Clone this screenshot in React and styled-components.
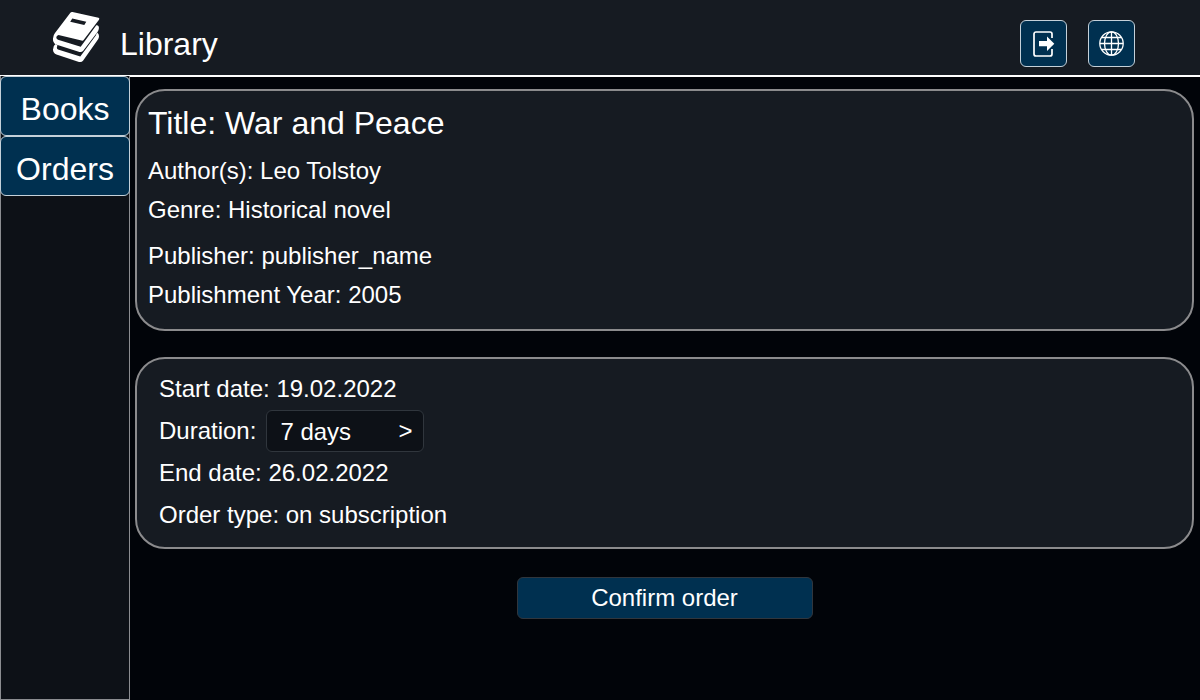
import React, { useState } from 'react';
import styled, { createGlobalStyle } from 'styled-components';

const GlobalStyle = createGlobalStyle`
  *, *::before, *::after { box-sizing: border-box; }
  body {
    margin: 0;
    background: #010409;
    color: #fff;
    font-family: "Liberation Sans", Arial, sans-serif;
    font-size: 24px;
  }
  button, select { font: inherit; color: inherit; }
`;

const Page = styled.div`
  display: flex;
  flex-direction: column;
  min-height: 100vh;
`;

const Header = styled.header`
  display: flex;
  align-items: center;
  justify-content: space-between;
  height: 77px;
  padding: 0 65px 0 52px;
  background: #161b22;
  border-bottom: 2px solid #fff;
`;

const Brand = styled.div`
  display: flex;
  align-items: flex-start;
  gap: 20px;
`;

const BrandName = styled.h1`
  margin: 0;
  padding-top: 15px;
  font-size: 32px;
  font-weight: 400;
  line-height: 36px;
`;

const HeaderActions = styled.div`
  display: flex;
  gap: 21px;
  padding-top: 12px;
`;

const IconButton = styled.button`
  display: flex;
  align-items: center;
  justify-content: center;
  width: 47px;
  height: 47px;
  padding: 0;
  background: #003050;
  border: 1px solid #c4d0d9;
  border-radius: 6px;
  cursor: pointer;
`;

const Body = styled.div`
  display: flex;
  flex: 1;
`;

const Sidebar = styled.nav`
  flex: 0 0 130px;
  margin-top: -1px;
  background: #0d1117;
  border: 1px solid #8b8d91;
  border-top: 0;
`;

const NavLink = styled.a`
  display: flex;
  align-items: center;
  justify-content: center;
  height: 60px;
  margin: 0 -1px;
  padding-top: 6px;
  background: #003050;
  border: 1px solid #c4d0d9;
  border-radius: 6px;
  color: #fff;
  font-size: 32px;
  line-height: 36px;
  text-decoration: none;
`;

const Main = styled.main`
  display: flex;
  flex: 1;
  flex-direction: column;
  padding: 12px 6px 24px 5px;
`;

const Card = styled.section`
  padding: ${(p) => (p.$form ? '9px 22px 11px' : '14px 11px 20px')};
  background: #161b22;
  border: 2px solid #8b8b8d;
  border-radius: 30px;
  & + & { margin-top: 26px; }
`;

const BookTitle = styled.h2`
  margin: 0 0 16px;
  font-size: 32px;
  font-weight: 400;
  line-height: 36px;
`;

const DetailGroup = styled.div`
  display: flex;
  flex-direction: column;
  gap: 11px;
  line-height: 28px;
  & + & { margin-top: 18px; }
`;

const FormRow = styled.div`
  display: flex;
  align-items: center;
  gap: 10px;
  line-height: 42px;
`;

const SelectBox = styled.div`
  position: relative;
  width: 158px;
  height: 42px;
`;

const Select = styled.select`
  appearance: none;
  width: 100%;
  height: 100%;
  padding: 0 36px 2px 13px;
  background: #0d1117;
  border: 1px solid #30363d;
  border-radius: 6px;
`;

const SelectArrow = styled.span`
  position: absolute;
  top: 0;
  right: 12px;
  pointer-events: none;
`;

const ConfirmButton = styled.button`
  align-self: center;
  width: 296px;
  height: 42px;
  margin-top: 28px;
  padding: 0;
  background: #003050;
  border: 1px solid #30363d;
  border-radius: 6px;
  cursor: pointer;
`;

function BooksIcon() {
  return (
    <svg width="48" height="54" viewBox="0 0 48 54" fill="#fff" aria-hidden="true">
      <path
        fillRule="evenodd"
        d="M20.500 1 L46.500 6.800 Q48 7.200 47 8.800 L31.800 28.800 Q31 30 29.500 29.600 L6.500 24 Q4.300 24.500 4.300 26.500 Q4.300 28.100 6 28.700 L28.700 35.800 L44.300 14.200 Q47.500 14 46.800 18 Q46.500 19.500 45.500 21 L31 40 Q29.500 41.500 27.500 40.900 L4 33.500 Q.600 31.500 1 27.500 Q1.200 24 3 22 L18 2.200 Q19 .700 20.500 1Z M20.300 7.500 L18.200 10.700 L32.300 14 L34.300 10.700Z"
      />
      <path d="M3.500 33 L5.500 34.500 Q4 37.500 6 38.400 L28.300 45.500 L43.800 24.500 L45 21.500 Q48.200 23.500 46.300 28 L31 49.700 Q29.500 51.600 27 50.900 L4.500 43.500 Q1 42 1 38.500 Q1.200 34.500 3.500 33Z" />
    </svg>
  );
}

function ExitIcon() {
  return (
    <svg width="22" height="26" viewBox="0 0 22 26" fill="none" aria-hidden="true">
      <path d="M19 7V3a2 2 0 0 0-2-2H3a2 2 0 0 0-2 2v20a2 2 0 0 0 2 2h14a2 2 0 0 0 2-2v-5" stroke="#fff" strokeWidth="1.700" />
      <path d="M6 10h8V5.500l7.300 7.200-7.300 7.200v-4.700H6z" fill="#fff" />
    </svg>
  );
}

function GlobeIcon() {
  return (
    <svg width="25" height="25" viewBox="0 0 25 25" fill="none" stroke="#fff" strokeWidth="1.300" aria-hidden="true">
      <circle cx="12.500" cy="12.500" r="11.700" />
      <ellipse cx="12.500" cy="12.500" rx="7" ry="11.700" />
      <path d="M12.500 1v23M1 12.500h23M3 6.500h19M3 18.500h19" />
    </svg>
  );
}

export default function App() {
  const [days, setDays] = useState('7');
  const end = { 7: '26.02.2022', 14: '05.03.2022' }[days];

  return (
    <>
      <GlobalStyle />
      <Page>
        <Header>
          <Brand>
            <BooksIcon />
            <BrandName>Library</BrandName>
          </Brand>
          <HeaderActions>
            <IconButton type="button" aria-label="Log out"><ExitIcon /></IconButton>
            <IconButton type="button" aria-label="Language"><GlobeIcon /></IconButton>
          </HeaderActions>
        </Header>
        <Body>
          <Sidebar>
            <NavLink href="#books">Books</NavLink>
            <NavLink href="#orders">Orders</NavLink>
          </Sidebar>
          <Main>
            <Card>
              <BookTitle>Title: War and Peace</BookTitle>
              <DetailGroup>
                <div>Author(s): Leo Tolstoy</div>
                <div>Genre: Historical novel</div>
              </DetailGroup>
              <DetailGroup>
                <div>Publisher: publisher_name</div>
                <div>Publishment Year: 2005</div>
              </DetailGroup>
            </Card>
            <Card $form>
              <FormRow>Start date: 19.02.2022</FormRow>
              <FormRow>
                <label htmlFor="duration">Duration:</label>
                <SelectBox>
                  <Select id="duration" value={days} onChange={(e) => setDays(e.target.value)}>
                    <option value="7">7 days</option>
                    <option value="14">14 days</option>
                  </Select>
                  <SelectArrow aria-hidden="true">&gt;</SelectArrow>
                </SelectBox>
              </FormRow>
              <FormRow>End date: {end}</FormRow>
              <FormRow>Order type: on subscription</FormRow>
            </Card>
            <ConfirmButton type="button">Confirm order</ConfirmButton>
          </Main>
        </Body>
      </Page>
    </>
  );
}
